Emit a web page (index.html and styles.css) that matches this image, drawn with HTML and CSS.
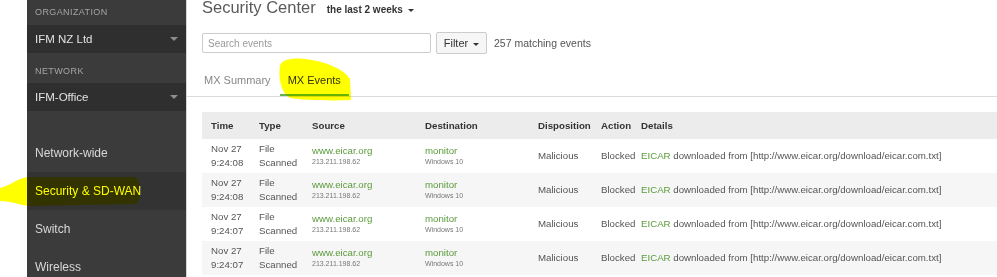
FILE: index.html
```html
<!DOCTYPE html>
<html lang="en">

<head>
    <meta charset="UTF-8" />
    <meta name="viewport" content="width=device-width, initial-scale=1.0" />
    <title>Security Center</title>
    <link rel="stylesheet" href="styles.css">
</head>

<body>
    <div class="layout">
        <div class="gutter"></div>

        <nav class="sidebar">
            <div class="side-label first">Organization</div>
            <div class="side-select">IFM NZ Ltd<span class="caret"></span></div>
            <div class="side-label">Network</div>
            <div class="side-select">IFM-Office<span class="caret"></span></div>

            <ul class="side-nav">
                <li>Network-wide</li>
                <li class="active">Security &amp; SD-WAN</li>
                <li>Switch</li>
                <li>Wireless</li>
            </ul>
        </nav>

        <main class="content">
            <div class="page-head">
                <h1>Security Center</h1>
                <span class="timespan">the last 2 weeks <span class="caret-dark"></span></span>
            </div>

            <div class="toolbar">
                <input type="text" placeholder="Search events" />
                <button>Filter <span class="caret-dark"></span></button>
                <span class="count">257 matching events</span>
            </div>

            <div class="tabs">
                <a>MX Summary</a>
                <a class="current">MX Events</a>
            </div>

            <table class="events">
                <thead>
                    <tr>
                        <th class="c-time">Time</th>
                        <th class="c-type">Type</th>
                        <th class="c-src">Source</th>
                        <th class="c-dst">Destination</th>
                        <th class="c-disp">Disposition</th>
                        <th class="c-act">Action</th>
                        <th>Details</th>
                    </tr>
                </thead>
                <tbody>
                    <tr>
                        <td>Nov 27<br>9:24:08</td>
                        <td>File<br>Scanned</td>
                        <td><span class="link">www.eicar.org</span><small>213.211.198.62</small></td>
                        <td><span class="link">monitor</span><small>Windows 10</small></td>
                        <td>Malicious</td>
                        <td>Blocked</td>
                        <td><span class="green">EICAR</span> downloaded from [http://www.eicar.org/download/eicar.com.txt]</td>
                    </tr>
                    <tr>
                        <td>Nov 27<br>9:24:08</td>
                        <td>File<br>Scanned</td>
                        <td><span class="link">www.eicar.org</span><small>213.211.198.62</small></td>
                        <td><span class="link">monitor</span><small>Windows 10</small></td>
                        <td>Malicious</td>
                        <td>Blocked</td>
                        <td><span class="green">EICAR</span> downloaded from [http://www.eicar.org/download/eicar.com.txt]</td>
                    </tr>
                    <tr>
                        <td>Nov 27<br>9:24:07</td>
                        <td>File<br>Scanned</td>
                        <td><span class="link">www.eicar.org</span><small>213.211.198.62</small></td>
                        <td><span class="link">monitor</span><small>Windows 10</small></td>
                        <td>Malicious</td>
                        <td>Blocked</td>
                        <td><span class="green">EICAR</span> downloaded from [http://www.eicar.org/download/eicar.com.txt]</td>
                    </tr>
                    <tr>
                        <td>Nov 27<br>9:24:07</td>
                        <td>File<br>Scanned</td>
                        <td><span class="link">www.eicar.org</span><small>213.211.198.62</small></td>
                        <td><span class="link">monitor</span><small>Windows 10</small></td>
                        <td>Malicious</td>
                        <td>Blocked</td>
                        <td><span class="green">EICAR</span> downloaded from [http://www.eicar.org/download/eicar.com.txt]</td>
                    </tr>
                </tbody>
            </table>
        </main>
    </div>

    <!-- highlighter marks drawn over the screenshot -->
    <svg class="marker" width="997" height="277" viewBox="0 0 997 277">
        <path d="M0,188 C9,186 17,179 27,177 L134,177 C142,178 143,202 135,204 L28,206 C18,204 9,201 0,201 Z" fill="#ffff00" />
        <path d="M280,66 C281,58 298,57 312,60 C328,63 344,69 350,79 L351,100 C330,101 302,100 290,98 C281,93 278,77 280,66 Z" fill="#ffff00" />
    </svg>
</body>

</html>
```

FILE: styles.css
```css
html {
    background: #fff;
}

body {
    margin: 0;
    height: 277px;
    overflow: hidden;
    font-family: "Liberation Sans", Arial, sans-serif;
    position: relative;
}

.layout {
    display: flex;
    height: 277px;
}

.gutter {
    width: 27px;
    flex: none;
}

/* sidebar */
.sidebar {
    width: 159px;
    flex: none;
    background: #3b3b3b;
    color: #dcdcdc;
}

.side-label {
    padding: 6px 0 0 8px;
    line-height: 24px;
    height: 24px;
    font-size: 9px;
    letter-spacing: 0.4px;
    text-transform: uppercase;
    color: #a5a5a5;
}

.side-label.first {
    padding-top: 0;
    height: 25px;
    line-height: 25px;
}

.side-select {
    position: relative;
    height: 28px;
    line-height: 28px;
    padding-left: 8px;
    background: #2f2f2f;
    font-size: 11.5px;
    color: #e2e2e2;
}

.caret {
    position: absolute;
    right: 8px;
    top: 12px;
    border-left: 4px solid transparent;
    border-right: 4px solid transparent;
    border-top: 4px solid #8d8d8d;
}

.side-nav {
    list-style: none;
    margin: 23px 0 0;
    padding: 0;
}

.side-nav li {
    height: 38px;
    line-height: 38px;
    padding-left: 8px;
    font-size: 12px;
    color: #d8d8d8;
}

.side-nav li.active {
    background: #333;
    color: #fff;
}

/* main area */
.content {
    flex: 1;
    min-width: 0;
    overflow: hidden;
    padding-left: 15px;
    border-left: 1px solid #d4d4d4;
}

.page-head {
    display: flex;
    align-items: baseline;
    gap: 11px;
    margin-top: -3px;
    height: 20px;
}

.page-head h1 {
    margin: 0;
    font-size: 16.5px;
    line-height: 20px;
    font-weight: normal;
    color: #5a5a5a;
}

.timespan {
    font-size: 10px;
    font-weight: bold;
    color: #333;
}

.caret-dark {
    display: inline-block;
    vertical-align: middle;
    margin-left: 2px;
    border-left: 3px solid transparent;
    border-right: 3px solid transparent;
    border-top: 3px solid #333;
}

.toolbar {
    display: flex;
    align-items: center;
    margin-top: 15px;
    height: 22px;
}

.toolbar input {
    box-sizing: border-box;
    width: 229px;
    height: 20px;
    margin: 0;
    padding: 0 5px;
    border: 1px solid #ccc;
    border-radius: 2px;
    font-family: inherit;
    font-size: 10px;
    outline: none;
}

.toolbar input::placeholder {
    color: #9a9a9a;
}

.toolbar button {
    box-sizing: border-box;
    width: 51px;
    height: 22px;
    margin-left: 5px;
    padding: 0;
    background: #f6f6f6;
    border: 1px solid #ccc;
    border-radius: 2px;
    font-family: inherit;
    font-size: 11px;
    color: #333;
}

.count {
    margin-left: 7px;
    font-size: 10.5px;
    color: #555;
}

.tabs {
    display: flex;
    gap: 1px;
    margin: 12px 0 0 -15px;
    padding-left: 9px;
    border-bottom: 1px solid #dcdcdc;
}

.tabs a {
    padding: 0 8px;
    line-height: 28px;
    border-bottom: 2px solid transparent;
    font-size: 11px;
    color: #888;
}

.tabs a.current {
    color: #333;
    border-bottom-color: #67b346;
}

/* events table */
.events {
    width: 820px;
    margin-top: 15px;
    border-collapse: collapse;
    table-layout: fixed;
    font-size: 9.7px;
    color: #555;
}

.events th,
.events td {
    padding: 0 0 0 9px;
    text-align: left;
    vertical-align: middle;
    white-space: nowrap;
}

.events th {
    height: 27px;
    background: #ececec;
    color: #333;
}

.events td {
    height: 34px;
    line-height: 14px;
}

.events tbody tr:nth-child(even) td {
    background: #f6f6f6;
}

.c-time { width: 39px; }
.c-type { width: 44px; }
.c-src { width: 104px; }
.c-dst { width: 104px; }
.c-disp { width: 54px; }
.c-act { width: 31px; }

.link {
    display: block;
    line-height: 12px;
    color: #5a9a3a;
}

.events small {
    display: block;
    line-height: 10px;
    font-size: 7px;
    color: #777;
}

.green {
    color: #5a9a3a;
}

.marker {
    position: absolute;
    left: 0;
    top: 0;
    pointer-events: none;
    mix-blend-mode: multiply;
}
```
